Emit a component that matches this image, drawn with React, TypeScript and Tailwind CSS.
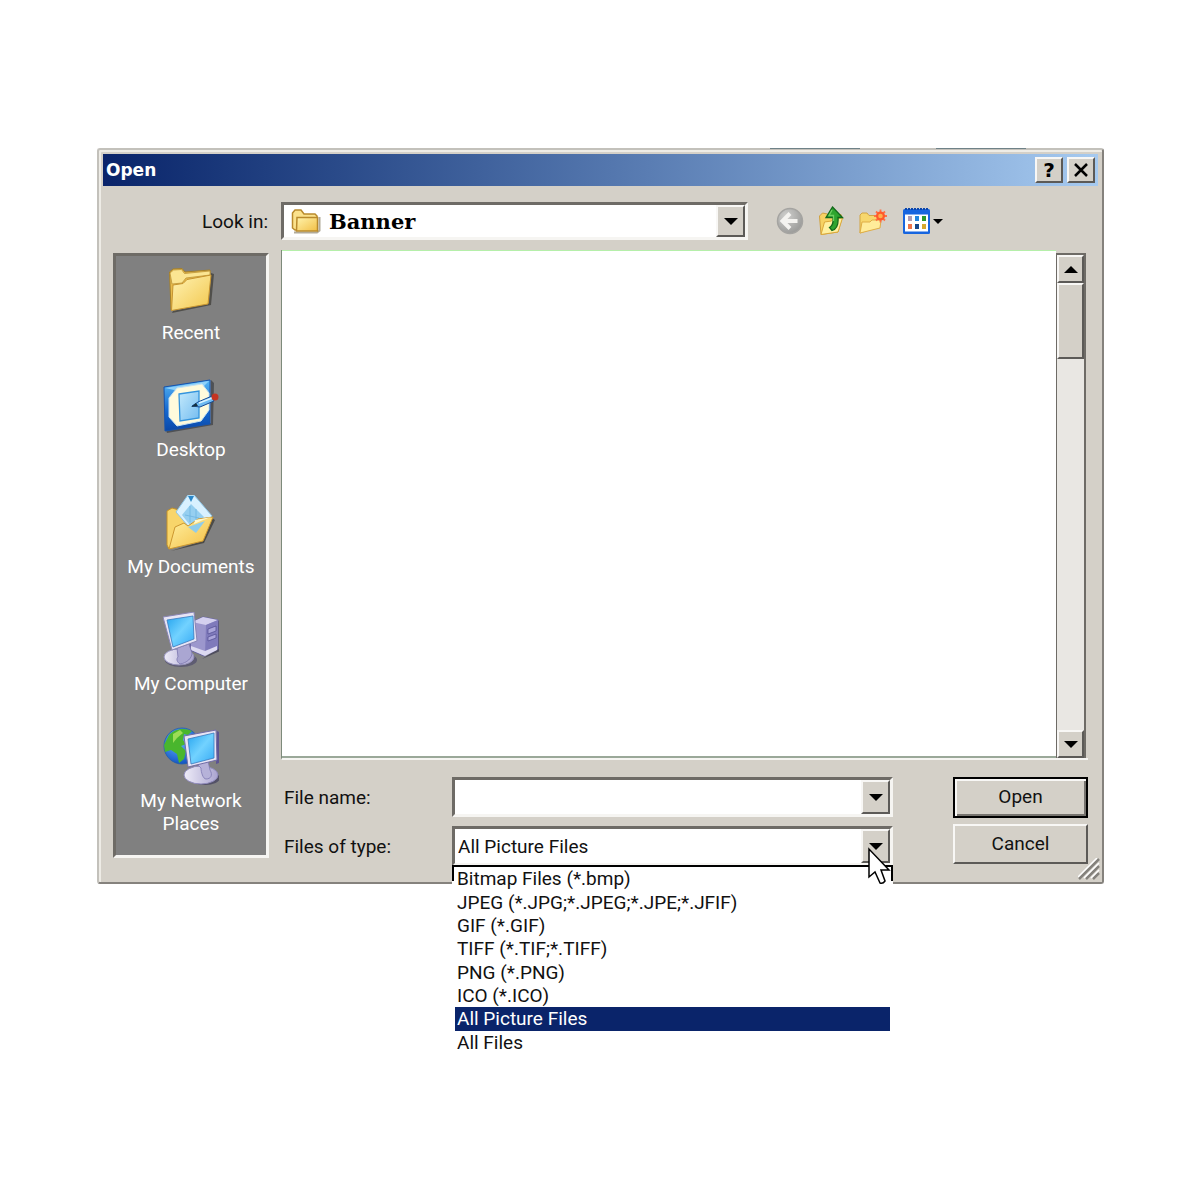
import React, { useState } from "react";

const SUNKEN =
  "border-[3px] border-t-[#6e6b66] border-l-[#6e6b66] border-r-[#f6f5f2] border-b-[#f6f5f2]";
const RAISED =
  "bg-[#d4d0c8] border-2 border-t-[#f8f7f5] border-l-[#f8f7f5] border-r-[#5c5a57] border-b-[#5c5a57]";

const FILE_TYPES = [
  "Bitmap Files (*.bmp)",
  "JPEG (*.JPG;*.JPEG;*.JPE;*.JFIF)",
  "GIF (*.GIF)",
  "TIFF (*.TIF;*.TIFF)",
  "PNG (*.PNG)",
  "ICO (*.ICO)",
  "All Picture Files",
  "All Files",
];

function Triangle({ up = false }: { up?: boolean }) {
  return (
    <svg width="14" height="7" viewBox="0 0 14 7" aria-hidden="true">
      <path d={up ? "M0 7L7 0L14 7Z" : "M0 0H14L7 7Z"} fill="#000" />
    </svg>
  );
}

function ArrowButton({ label, onClick }: { label: string; onClick?: () => void }) {
  return (
    <button
      type="button"
      aria-label={label}
      onClick={onClick}
      className={`flex w-[29px] shrink-0 items-center justify-center ${RAISED}`}
    >
      <Triangle />
    </button>
  );
}

function SmallFolder() {
  return (
    <svg width="30" height="26" viewBox="0 0 30 26" aria-hidden="true">
      <path d="M3 24.500h23l2.500-2V9" fill="none" stroke="#7d7154" strokeWidth="2" opacity=".6" />
      <path d="M1.500 20V5L4 2h6l3 4h11l2 2v14H4z" fill="#fbe28c" stroke="#b98a2c" strokeWidth="1.500" />
      <path d="M6 9.500h20.500V23H5.500z" fill="url(#sf)" stroke="#b98a2c" strokeWidth="1.500" />
      <defs>
        <linearGradient id="sf" x1="0" y1="0" x2="1" y2="1">
          <stop offset="0" stopColor="#fff3ac" />
          <stop offset="1" stopColor="#f2bf45" />
        </linearGradient>
      </defs>
    </svg>
  );
}

function BackIcon() {
  return (
    <svg width="28" height="28" viewBox="0 0 28 28" aria-hidden="true">
      <defs>
        <radialGradient id="bk" cx=".35" cy=".3" r=".8">
          <stop offset="0" stopColor="#cfcfcd" />
          <stop offset="1" stopColor="#969694" />
        </radialGradient>
      </defs>
      <circle cx="14" cy="14" r="12.500" fill="url(#bk)" stroke="#a5a4a1" strokeWidth="1.500" />
      <path d="M14 6.500L6.500 14L14 21.500M7 14H21.500" fill="none" stroke="#f4f3f0" strokeWidth="4" />
    </svg>
  );
}

function UpIcon() {
  return (
    <svg width="26" height="30" viewBox="0 0 26 30" aria-hidden="true">
      <path d="M1.500 10l3-3 5 1 1.500 2 12-1.500L24 12l-4 14L3 28.500z" fill="#f6d263" stroke="#d0a03c" strokeWidth="1" />
      <path d="M3 28.500L6.500 16l7-1 1.500-2 9.500-1-4.500 14z" fill="#fff0a0" stroke="#dba83a" strokeWidth="1" />
      <path d="M14.500 1L24.500 11.500h-4.500c.5 6-1 11.500-6 13l-2.500-3c3-1.500 4-5 3.500-10H8z" fill="#2fa52f" stroke="#12691a" strokeWidth="1.300" />
      <path d="M14 4l-3 5.500h4.500V15" fill="none" stroke="#6fd062" strokeWidth="1.300" />
    </svg>
  );
}

function NewFolderIcon() {
  return (
    <svg width="30" height="28" viewBox="0 0 30 28" aria-hidden="true">
      <path d="M2 26V8l2-2h5l2 2.500h9V20z" fill="#f7d76d" stroke="#d2a544" strokeWidth="1" />
      <path d="M2 26l2-11h8l2-2h9L22 21z" fill="#ffec9a" stroke="#dfad46" strokeWidth="1" />
      <path
        d="M22.500 2.500v13M16 9h13M18 4.500l9 9M27 4.500l-9 9"
        stroke="#ff7048"
        strokeWidth="1.800"
      />
      <circle cx="22.500" cy="9" r="4.500" fill="#ff5a2c" />
      <circle cx="22.500" cy="9" r="2.300" fill="#ffb04d" />
    </svg>
  );
}

function ViewsIcon() {
  return (
    <svg width="42" height="28" viewBox="0 0 42 28" aria-hidden="true">
      <rect x="1" y="2" width="27" height="25" rx="1.500" fill="#1765df" />
      <path d="M3 2H26" stroke="#0b45ab" strokeWidth="2" strokeDasharray="2 1" />
      <path d="M3 7.500H26V24.500H3z" fill="#fff" />
      <rect x="6" y="9" width="4" height="5" fill="#ad9bb5" />
      <rect x="13" y="9" width="4" height="5" fill="#2386e0" />
      <rect x="20" y="9" width="4" height="5" fill="#2b992b" />
      <rect x="6" y="17" width="4" height="5" fill="#ee7348" />
      <rect x="13" y="17" width="4" height="5" fill="#164788" />
      <rect x="20" y="17" width="4" height="5" fill="#d6a82d" />
      <path d="M31 12h10l-5 5z" fill="#000" />
    </svg>
  );
}

function RecentIcon() {
  return (
    <svg width="56" height="56" viewBox="0 0 56 56" aria-hidden="true">
      <defs>
        <linearGradient id="rc" x1="0" y1="0" x2="1" y2="1">
          <stop offset="0" stopColor="#fff3b4" />
          <stop offset="1" stopColor="#f2c74d" />
        </linearGradient>
      </defs>
      <path d="M9 52L48 44L51 13L48 12L46 42L10 50z" fill="#3c3a35" opacity=".7" />
      <path d="M6.500 11L10 8l9-.5 3 3.500 25-2v6L45 42 8 49z" fill="#e8bb4b" stroke="#a4802b" />
      <path d="M7 12l3.500-3 8-.5 3 4L47 10v4L23 17l-4 5L9 23z" fill="#fbe592" stroke="#bc9438" strokeWidth=".8" />
      <path d="M10 24l10-1.500 4-4L48 14l-3 29L8.500 49.500z" fill="url(#rc)" stroke="#c69430" />
    </svg>
  );
}

function DesktopIcon() {
  return (
    <svg width="56" height="56" viewBox="0 0 56 56" aria-hidden="true">
      <defs>
        <linearGradient id="dk" x1="0" y1="0" x2="0" y2="1">
          <stop offset="0" stopColor="#56b7f5" />
          <stop offset=".6" stopColor="#1467cf" />
          <stop offset="1" stopColor="#0a48a8" />
        </linearGradient>
        <linearGradient id="dp" x1="0" y1="0" x2="1" y2="1">
          <stop offset="0" stopColor="#c4eafc" />
          <stop offset="1" stopColor="#74bcf0" />
        </linearGradient>
      </defs>
      <path d="M4 55L50 47L51 5L48 2V45L3 52z" fill="#3b3d43" opacity=".7" />
      <path d="M1 9L47 2V46L2 53z" fill="url(#dk)" stroke="#1553ad" />
      <path d="M2 10L46 3l-5 5-30 4z" fill="#8ed1fa" />
      <path d="M14 10L39 6l7 9v17l-8 11-24 5-8-9V20z" fill="#fffbdc" stroke="#c8e3f1" />
      <path d="M16 16L36 13V40L17 43z" fill="url(#dp)" stroke="#3494dd" strokeWidth="1.300" />
      <path d="M29 28l6-4 14-6 2 5-14 6z" fill="#6ebbf2" stroke="#174b96" />
      <path d="M28 29l5-4 2 3z" fill="#15303d" />
      <path d="M36 25l13-5" stroke="#dbf4ff" strokeWidth="1.500" />
      <circle cx="52" cy="19" r="3.500" fill="#c43422" />
    </svg>
  );
}

function DocumentsIcon() {
  return (
    <svg width="56" height="56" viewBox="0 0 56 56" aria-hidden="true">
      <defs>
        <linearGradient id="dc" x1="0" y1="0" x2="1" y2="1">
          <stop offset="0" stopColor="#fff2a5" />
          <stop offset="1" stopColor="#f3bd40" />
        </linearGradient>
      </defs>
      <path d="M8 56L41 48L52 25L49 23L39 46z" fill="#3b3934" opacity=".75" />
      <path d="M4 16l5-3 7 2 7 9 15 5L6 54 4 50z" fill="#f8d56a" stroke="#c39128" />
      <path d="M25 0h6L49 21 32 39 13 17z" fill="#d9f1ff" stroke="#8fc7e8" />
      <path d="M28 9L41 22 30 34 19 20z" fill="#96cff0" />
      <path d="M25 1h6l-3 6z" fill="#2a86c8" />
      <path d="M27 11v16M22 20l14 3M33 14v17" stroke="#6db4df" strokeWidth=".8" />
      <path d="M6 54l6-22 9-4 4 3 10-7 15-2-10 24z" fill="url(#dc)" stroke="#cc972f" />
      <path d="M25 32l17-6-9 12z" fill="#8fcceb" />
      <path d="M32 25l17-3-9 3-9 4z" fill="#fff8cd" />
    </svg>
  );
}

function ScreenDefs() {
  return (
    <svg width="0" height="0" className="absolute" aria-hidden="true">
      <defs>
        <linearGradient id="scr" x1="0" y1="0" x2="1" y2="1">
          <stop offset="0" stopColor="#25a4ef" />
          <stop offset=".5" stopColor="#72d2ff" />
          <stop offset="1" stopColor="#36aaf5" />
        </linearGradient>
        <linearGradient id="stand" x1="0" y1="0" x2="1" y2="0">
          <stop offset="0" stopColor="#eeecf8" />
          <stop offset="1" stopColor="#aaa4d0" />
        </linearGradient>
      </defs>
    </svg>
  );
}

function ComputerIcon() {
  return (
    <svg width="56" height="56" viewBox="0 0 56 56" aria-hidden="true">
      <path d="M39 47l18-8V10l-3-2v29z" fill="#3a3950" opacity=".7" />
      <path d="M29 10l11-5 15 3v29L41 44l-14-6z" fill="#9c97cd" stroke="#6662a3" />
      <path d="M29 10l11-5 15 3-12 5z" fill="#d4d0ef" />
      <path d="M43 13l12-5v29L42 43z" fill="#7f7abb" />
      <path d="M45 17l8-3v5l-8 3zM45 25l8-3v4l-8 3z" fill="#aaa5da" stroke="#504c90" strokeWidth=".7" />
      <path d="M28 34l14 5 12-5v4l-12 6-14-6z" fill="#dcd9f1" />
      <ellipse cx="18" cy="48" rx="16" ry="7" fill="#4b486a" opacity=".65" />
      <ellipse cx="16" cy="45" rx="15" ry="8" fill="url(#stand)" stroke="#9490bb" />
      <path d="M14 36l12-4 3 9c0 5-5 10-12 11-3-2-4-5-2-7z" fill="#aaa6d2" stroke="#7974ad" strokeWidth=".8" />
      <path d="M0 5L31 0l3 29L9 38z" fill="#e7e5f5" stroke="#8985b4" />
      <path d="M4 8L30 4l1 23L10 35z" fill="url(#scr)" stroke="#3978bd" strokeWidth=".8" />
    </svg>
  );
}

function NetworkIcon() {
  return (
    <svg width="56" height="60" viewBox="0 0 56 60" aria-hidden="true">
      <defs>
        <radialGradient id="gl" cx=".4" cy=".35" r=".7">
          <stop offset="0" stopColor="#68b9ff" />
          <stop offset="1" stopColor="#0d4ec0" />
        </radialGradient>
      </defs>
      <circle cx="19" cy="19" r="18" fill="url(#gl)" stroke="#225eaa" strokeWidth=".8" />
      <path d="M6 8C11 2 21 0 29 4l-4 4-4-1-1 6 3 4-5 2 5 5-2 8-5 4-2-9-6-4-6 2-1-7z" fill="#49b62d" />
      <path d="M10 7l7-4 3 3-6 5-4 5z" fill="#9bdc56" />
      <ellipse cx="42" cy="51" rx="15" ry="7" fill="#403d5d" opacity=".7" />
      <ellipse cx="38" cy="48" rx="17" ry="9" fill="url(#stand)" stroke="#908bbc" />
      <path d="M34 37l11-3 2 9c3 5 1 9-4 9-3 0-5-7-5-11z" fill="#b6b2d9" stroke="#7f7ab2" strokeWidth=".8" />
      <path d="M54 4l2 1v31l-3 1z" fill="#5b5392" />
      <path d="M21 9L53 3l1 30-29 7z" fill="#e7e5f5" stroke="#736da6" />
      <path d="M25 12L51 6v25l-23 6z" fill="url(#scr)" stroke="#3978bd" strokeWidth=".8" />
    </svg>
  );
}

const PLACES = [
  { lines: ["Recent"], icon: <RecentIcon /> },
  { lines: ["Desktop"], icon: <DesktopIcon /> },
  { lines: ["My Documents"], icon: <DocumentsIcon /> },
  { lines: ["My Computer"], icon: <ComputerIcon /> },
  { lines: ["My Network", "Places"], icon: <NetworkIcon /> },
];

function TitleBar() {
  return (
    <header className="flex h-8 items-center justify-between bg-linear-to-r from-[#0a246a] to-[#a6caf0] px-[3px]">
      <h1 className="font-['DejaVu_Sans'] text-[17px] font-bold text-white">Open</h1>
      <div className="flex gap-1">
        <button type="button" aria-label="Help" className={`flex h-[26px] w-7 items-center justify-center font-['DejaVu_Sans'] text-xl leading-5 font-bold text-black ${RAISED}`}>
          ?
        </button>
        <button type="button" aria-label="Close" className={`flex h-[26px] w-7 items-center justify-center ${RAISED}`}>
          <svg width="14" height="14" viewBox="0 0 14 14" aria-hidden="true">
            <path d="M1 1L13 13M13 1L1 13" stroke="#000" strokeWidth="2.500" />
          </svg>
        </button>
      </div>
    </header>
  );
}

function Scrollbar() {
  return (
    <div className="mt-[3px] mr-0.5 flex w-[30px] flex-col border-t-2 border-r-2 border-l border-[#6e6b66] bg-[#e9e7e3]">
      <button type="button" aria-label="Scroll up" className={`flex h-7 items-center justify-center ${RAISED}`}>
        <Triangle up />
      </button>
      <div className={`h-[76px] ${RAISED}`} />
      <div className="flex-1" />
      <button type="button" aria-label="Scroll down" className={`flex h-7 items-center justify-center ${RAISED}`}>
        <Triangle />
      </button>
    </div>
  );
}

function Pointer() {
  return (
    <svg width="24" height="38" viewBox="0 0 24 38" className="pointer-events-none absolute top-[18px] -right-px z-20" aria-hidden="true">
      <path d="M2 2V30L8 25L13 36Q16 37 18 34L14 23H22z" fill="#fff" stroke="#000" strokeWidth="1.500" />
    </svg>
  );
}

export default function App() {
  const [type, setType] = useState("All Picture Files");
  const [open, setOpen] = useState(true);

  return (
    <main className="min-h-screen bg-white pt-[148px] pr-24 pl-[97px] font-[Roboto,sans-serif] text-[19px] leading-[23px] text-[#111]">
      <ScreenDefs />
      <section
        aria-label="Open"
        className="relative rounded-[3px] border-2 border-t-[#c3c1bb] border-r-[#85827d] border-b-[#85827d] border-l-[#c3c1bb] bg-[#d4d0c8] p-1 pb-4 shadow-[inset_2px_2px_0_#eeece6]"
      >
        <div className="absolute -top-0.5 right-9 flex h-px w-[296px] justify-between" aria-hidden="true">
          <div className="w-[90px] bg-[#6f8288]" />
          <div className="w-[90px] bg-[#6f8288]" />
          <div className="-mr-[36px] w-px" />
        </div>
        <TitleBar />

        <div className="mt-4 mr-[10px] flex items-center">
          <label htmlFor="look-in" className="w-[165px] text-right">
            Look in:
          </label>
          <div className={`ml-[13px] flex h-[38px] flex-1 bg-white pl-[7px] ${SUNKEN}`}>
            <span className="flex items-center">
              <SmallFolder />
            </span>
            <select id="look-in" className="min-w-0 flex-1 appearance-none bg-white pl-2 font-['DejaVu_Serif'] text-[21px] font-bold text-black outline-none">
              <option>Banner</option>
            </select>
            <ArrowButton label="Show folders" />
          </div>
          <div className="flex w-[340px] items-center gap-[14px] pl-7">
            <button type="button" aria-label="Back"><BackIcon /></button>
            <button type="button" aria-label="Up one level"><UpIcon /></button>
            <button type="button" aria-label="New folder"><NewFolderIcon /></button>
            <button type="button" aria-label="Views"><ViewsIcon /></button>
          </div>
        </div>

        <div className="mx-[10px] mt-[10px] flex gap-3">
          <nav aria-label="Places" className={`mt-[3px] mb-2 w-[156px] shrink-0 bg-[#808080] pt-1 ${SUNKEN}`}>
            <ul>
              {PLACES.map((place) => (
                <li key={place.lines[0]}>
                  <button type="button" className="flex h-[117px] w-full flex-col items-center gap-[3px] text-white">
                    <span className="flex h-[58px] items-center">{place.icon}</span>
                    <span className="whitespace-nowrap">
                      {place.lines.map((line) => (
                        <span key={line} className="block">{line}</span>
                      ))}
                    </span>
                  </button>
                </li>
              ))}
            </ul>
          </nav>

          <div className="min-w-0 flex-1">
            <div className="flex h-[510px] border-b-2 border-l border-b-[#f6f5f2] border-l-[#7d8a7b]">
              <div className="flex-1 border-t border-b-2 border-t-[#b5efaa] border-b-[#9aa899] bg-white" />
              <Scrollbar />
            </div>

            <div className="mt-[17px] flex gap-[60px]">
              <div className="flex flex-1 flex-col gap-[9px]">
                <div className="flex items-center">
                  <label htmlFor="file-name" className="w-[171px] pl-[3px]">
                    File name:
                  </label>
                  <div className={`flex h-10 flex-1 bg-white ${SUNKEN}`}>
                    <input id="file-name" type="text" className="min-w-0 flex-1 bg-white px-1 outline-none" />
                    <ArrowButton label="Show recent names" />
                  </div>
                </div>
                <div className="flex items-center">
                  <label htmlFor="file-type" className="w-[171px] pl-[3px]">
                    Files of type:
                  </label>
                  <div className={`relative flex h-10 flex-1 bg-white ${SUNKEN}`}>
                    <select
                      id="file-type"
                      value={type}
                      onChange={(e) => setType(e.target.value)}
                      className="min-w-0 flex-1 appearance-none bg-white pl-[3px] text-[#111] outline-none"
                    >
                      {FILE_TYPES.map((t) => (
                        <option key={t}>{t}</option>
                      ))}
                    </select>
                    <ArrowButton label="Show file types" onClick={() => setOpen(!open)} />
                    <Pointer />
                    {open && (
                      <div className="absolute top-full -right-[3px] -left-[3px] z-10 mt-0.5 bg-white">
                        <div className="h-4 border-x-2 border-t-2 border-black" />
                        <ul role="listbox" aria-label="File types" className="-mt-[14px] grid h-[187px] auto-rows-fr px-[3px]">
                          {FILE_TYPES.map((t) => (
                            <li key={t} role="option" aria-selected={t === type} className="flex">
                              <button
                                type="button"
                                onClick={() => setType(t)}
                                className={`flex w-full items-center pl-0.5 text-left ${t === type ? "bg-[#0a246a] text-white" : ""}`}
                              >
                                {t}
                              </button>
                            </li>
                          ))}
                        </ul>
                      </div>
                    )}
                  </div>
                </div>
              </div>
              <div className="flex w-[135px] flex-col gap-[6px]">
                <button type="button" className="h-[41px] border-2 border-black bg-[#d4d0c8] pb-0.5 shadow-[inset_2px_2px_0_#f8f7f5,inset_-2px_-2px_0_#77746f]">
                  Open
                </button>
                <button type="button" className={`h-10 pb-0.5 ${RAISED}`}>
                  Cancel
                </button>
              </div>
            </div>
          </div>
        </div>

        <svg width="22" height="22" viewBox="0 0 22 22" className="absolute right-0.5 bottom-0.5" aria-hidden="true">
          <path d="M1 21L21 1M8 21L21 8M15 21L21 15" stroke="#85827d" strokeWidth="2.500" />
          <path d="M0 19L19 0M6 20L21 5M13 20L21 12" stroke="#fff" strokeWidth="1.500" />
        </svg>
      </section>
    </main>
  );
}
